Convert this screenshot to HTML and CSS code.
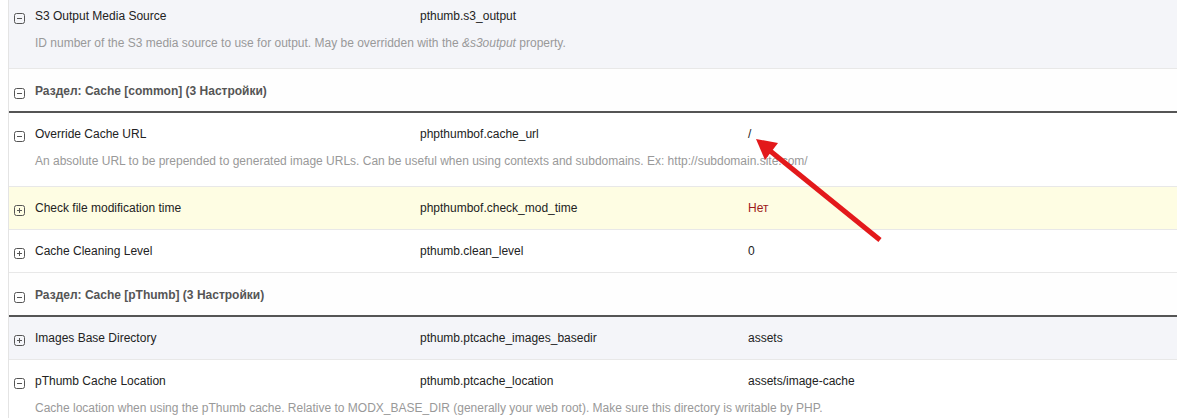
FILE: index.html
```html
<!DOCTYPE html>
<html lang="en">
<head>
  <meta charset="UTF-8">
  <title>pThumb – System Settings</title>
  <link rel="stylesheet" href="styles.css">
</head>
<body>
  <div class="grid">
    <div class="row alt has-desc">
      <svg class="icon" viewBox="0 0 11 11"><rect x="0.5" y="0.5" width="10" height="10" rx="2"/><path d="M3 5.5h5"/></svg>
      <div class="main">
        <div class="cols"><span>S3 Output Media Source</span><span>pthumb.s3_output</span><span></span></div>
        <div class="desc">ID number of the S3 media source to use for output. May be overridden with the <em>&amp;s3output</em> property.</div>
      </div>
    </div>

    <div class="group">
      <svg class="icon" viewBox="0 0 11 11"><rect x="0.5" y="0.5" width="10" height="10" rx="2"/><path d="M3 5.5h5"/></svg>
      <span>Раздел: Cache [common] (3 Настройки)</span>
    </div>

    <div class="row has-desc">
      <svg class="icon" viewBox="0 0 11 11"><rect x="0.5" y="0.5" width="10" height="10" rx="2"/><path d="M3 5.5h5"/></svg>
      <div class="main">
        <div class="cols"><span>Override Cache URL</span><span>phpthumbof.cache_url</span><span>/</span></div>
        <div class="desc">An absolute URL to be prepended to generated image URLs. Can be useful when using contexts and subdomains. Ex: http://subdomain.site.com/</div>
      </div>
    </div>

    <div class="row changed">
      <svg class="icon" viewBox="0 0 11 11"><rect x="0.5" y="0.5" width="10" height="10" rx="2"/><path d="M3 5.5h5M5.5 3v5"/></svg>
      <div class="main">
        <div class="cols"><span>Check file modification time</span><span>phpthumbof.check_mod_time</span><span class="no">Нет</span></div>
      </div>
    </div>

    <div class="row">
      <svg class="icon" viewBox="0 0 11 11"><rect x="0.5" y="0.5" width="10" height="10" rx="2"/><path d="M3 5.5h5M5.5 3v5"/></svg>
      <div class="main">
        <div class="cols"><span>Cache Cleaning Level</span><span>pthumb.clean_level</span><span>0</span></div>
      </div>
    </div>

    <div class="group">
      <svg class="icon" viewBox="0 0 11 11"><rect x="0.5" y="0.5" width="10" height="10" rx="2"/><path d="M3 5.5h5"/></svg>
      <span>Раздел: Cache [pThumb] (3 Настройки)</span>
    </div>

    <div class="row alt">
      <svg class="icon" viewBox="0 0 11 11"><rect x="0.5" y="0.5" width="10" height="10" rx="2"/><path d="M3 5.5h5M5.5 3v5"/></svg>
      <div class="main">
        <div class="cols"><span>Images Base Directory</span><span>pthumb.ptcache_images_basedir</span><span>assets</span></div>
      </div>
    </div>

    <div class="row has-desc">
      <svg class="icon" viewBox="0 0 11 11"><rect x="0.5" y="0.5" width="10" height="10" rx="2"/><path d="M3 5.5h5"/></svg>
      <div class="main">
        <div class="cols"><span>pThumb Cache Location</span><span>pthumb.ptcache_location</span><span>assets/image-cache</span></div>
        <div class="desc">Cache location when using the pThumb cache. Relative to MODX_BASE_DIR (generally your web root). Make sure this directory is writable by PHP.</div>
      </div>
    </div>
  </div>

  <!-- annotation arrow drawn over the screenshot -->
  <svg class="arrow" viewBox="0 0 1177 418">
    <line x1="880" y1="240" x2="769" y2="150" />
    <polygon points="756,139 778,143 765,160" />
  </svg>
</body>
</html>
```

FILE: styles.css
```css
body { margin: 0; font: 12px "Liberation Sans", Arial, sans-serif; color: #333; background: #fff; position: relative; height: 418px; overflow: hidden; }
.grid { margin: -5px 0 0 8px; border-left: 1px solid #e4e4e4; }
.row { display: flex; align-items: flex-start; padding: 13px 0 13px 5px; line-height: 16px; border-bottom: 1px solid #e8e8e8; }
.row.has-desc { padding-bottom: 17px; }
.row.alt { background: #f4f5f9; }
.row.changed { background: #fefde3; }
.icon { flex: none; width: 11px; height: 11px; margin: 5px 10px 0 0; }
.icon rect, .icon path { fill: none; stroke: #555; stroke-width: 1; }
.main { flex: 1; }
.cols { display: grid; grid-template-columns: 385px 328px 1fr; color: #222; }
.desc { margin-top: 11px; color: #999; }
.no { color: #9c1a1a; }
.group { display: flex; align-items: flex-start; padding: 14px 0 12px 5px; line-height: 16px; font-weight: bold; color: #555; background: #fefefe; border-bottom: 2px solid #555; }
.arrow { position: absolute; left: 0; top: 0; width: 1177px; height: 418px; pointer-events: none; }
.arrow line { stroke: #e3191b; stroke-width: 5; }
.arrow polygon { fill: #e3191b; }
```
